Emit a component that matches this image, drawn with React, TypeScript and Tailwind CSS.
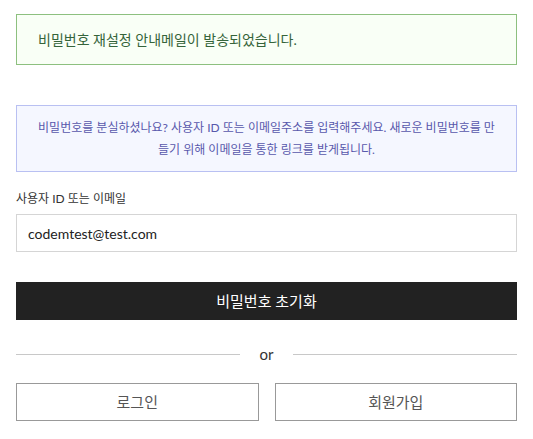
const App = () => {
  return (
    <div
      className="w-[533px] bg-white px-4 pt-[14px]"
      style={{ fontFamily: 'Lato, "Noto Sans CJK KR", sans-serif' }}
    >
      {/* success alert */}
      <div className="flex h-[51px] items-center border border-[#8dc07f] bg-[#f9fff6] pl-[21px] text-[14px] text-[#35643a]">
        비밀번호 재설정 안내메일이 발송되었습니다.
      </div>

      {/* info box */}
      <div className="mt-10 flex h-[67px] items-center justify-center border border-[#b9c0f2] bg-[#f5f7ff] px-5 text-center text-[12px] leading-[22px] text-[#5858ac]">
        비밀번호를 분실하셨나요? 사용자 ID 또는 이메일주소를 입력해주세요. 새로운 비밀번호를 만들기 위해 이메일을 통한 링크를 받게됩니다.
      </div>

      {/* form */}
      <div className="mt-[18px]">
        <label className="block text-[12px] leading-[18px] text-[#333]">사용자 ID 또는 이메일</label>
        <input
          className="mt-[6px] block h-[38px] w-full border border-[#d5d5d5] px-[11px] text-[14px] text-[#222] outline-none"
          defaultValue="codemtest@test.com"
        />
        <button className="mt-[30px] flex h-[38px] w-full items-center justify-center bg-[#222] text-[15px] text-white">
          비밀번호 초기화
        </button>
      </div>

      {/* divider */}
      <div className="mt-[24px] flex items-center gap-[20px]">
        <div className="h-px flex-1 bg-[#c8c8c8]" />
        <span className="text-[15px] leading-[20px] text-[#333]">or</span>
        <div className="h-px flex-1 bg-[#c8c8c8]" />
      </div>

      <div className="mt-[19px] grid grid-cols-2 gap-4 pb-[17px]">
        <button className="flex h-[38px] items-center justify-center border border-[#999] text-[15px] text-[#555]">
          로그인
        </button>
        <button className="flex h-[38px] items-center justify-center border border-[#999] text-[15px] text-[#555]">
          회원가입
        </button>
      </div>
    </div>
  );
};

export default App;
